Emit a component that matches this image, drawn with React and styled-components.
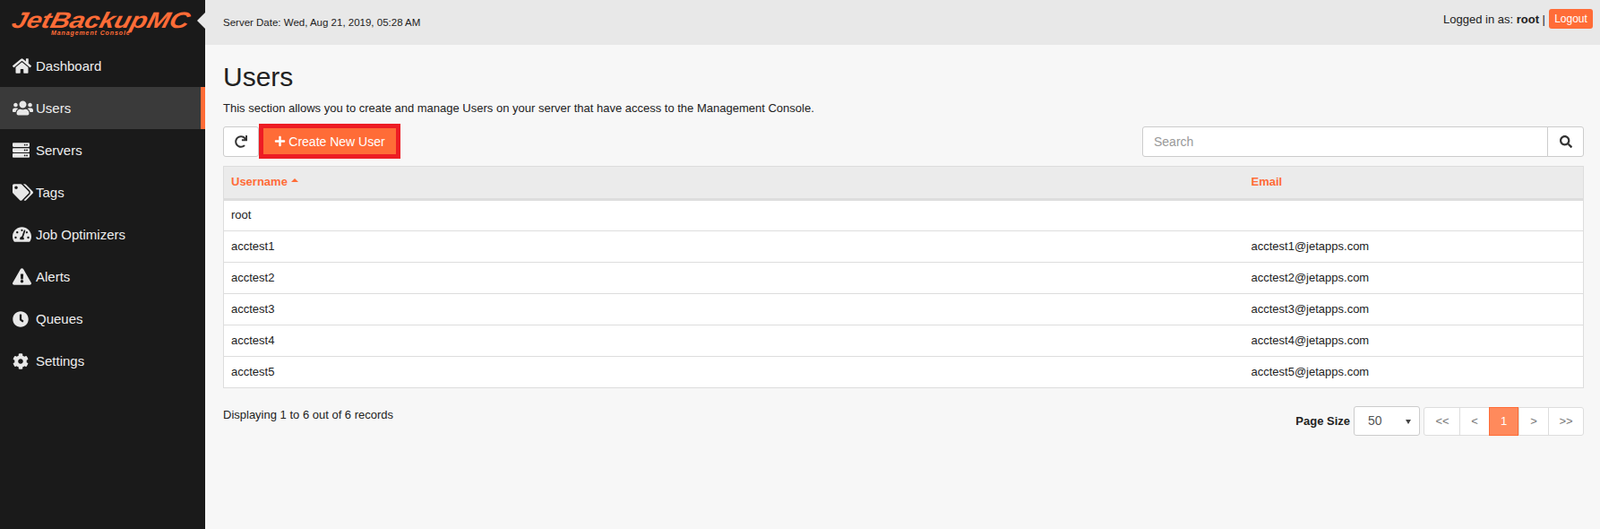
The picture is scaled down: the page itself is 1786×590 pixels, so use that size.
import React from 'react';
import styled, { createGlobalStyle } from 'styled-components';
import {
  FaHome,
  FaUsers,
  FaServer,
  FaTags,
  FaTachometerAlt,
  FaExclamationTriangle,
  FaClock,
  FaCog,
  FaRedo,
  FaPlus,
  FaSearch,
} from 'react-icons/fa';

const orange = '#ff6c37';

const GlobalStyle = createGlobalStyle`
  html, body {
    margin: 0;
    padding: 0;
    height: 100%;
    overflow: hidden;
  }
  body {
    font-family: "Liberation Sans", Arial, sans-serif;
    font-size: 13px;
    color: #222;
    background: #f7f7f7;
  }
  * {
    box-sizing: border-box;
  }
`;

const Page = styled.div`
  display: flex;
  height: 590px;
`;

const Sidebar = styled.aside`
  position: relative;
  flex: 0 0 229px;
  background: #1a1a1a;
`;

const Notch = styled.span`
  position: absolute;
  top: 14px;
  right: 0;
  border-style: solid;
  border-width: 9px 9px 9px 0;
  border-color: transparent #e8e8e8 transparent transparent;
`;

const Logo = styled.div`
  height: 50px;
  padding: 11px 0 0 14px;
  color: ${orange};
  font-style: italic;
  font-weight: bold;
`;

const LogoName = styled.div`
  font-size: 25px;
  line-height: 22px;
  letter-spacing: -0.2px;
  transform: scaleX(1.21) skewX(-12deg);
  transform-origin: left;
`;

const LogoSub = styled.div`
  position: relative;
  margin: 0 0 0 43px;
  font-size: 7px;
  line-height: 7px;
  letter-spacing: 0.9px;
`;

const Nav = styled.nav`
  display: flex;
  flex-direction: column;
`;

const NavItem = styled.a`
  display: flex;
  align-items: center;
  height: 47px;
  padding-left: 14px;
  font-size: 15px;
  color: #eee;
  background: ${(p) => (p.$active ? '#3a3a3a' : 'transparent')};
  border-right: 5px solid ${(p) => (p.$active ? orange : 'transparent')};
`;

const NavIcon = styled.span`
  display: flex;
  align-items: center;
  width: 26px;
  color: #e8e8e8;
`;

const Main = styled.main`
  flex: 1;
  min-width: 0;
  display: flex;
  flex-direction: column;
`;

const TopBar = styled.header`
  display: flex;
  align-items: center;
  justify-content: space-between;
  height: 50px;
  padding: 0 8px 0 20px;
  background: #e8e8e8;
`;

const ServerDate = styled.span`
  font-size: 11.5px;
`;

const Logged = styled.div`
  display: flex;
  align-items: center;
  gap: 4px;
  margin-top: -8px;
`;

const LogoutButton = styled.button`
  height: 22px;
  width: 49px;
  padding: 0;
  border: 0;
  border-radius: 3px;
  background: ${orange};
  color: #fff;
  font: 12px "Liberation Sans", Arial, sans-serif;
`;

const Content = styled.div`
  padding: 0 18px 0 20px;
`;

const Title = styled.h1`
  margin: 19px 0 0;
  font-size: 30px;
  font-weight: normal;
  line-height: 33px;
  color: #222;
`;

const Intro = styled.p`
  margin: 12px 0 0;
  line-height: 14px;
`;

const Toolbar = styled.div`
  display: flex;
  align-items: center;
  justify-content: space-between;
  height: 39px;
  margin-top: 10px;
`;

const ToolGroup = styled.div`
  display: flex;
  align-items: center;
`;

const RefreshButton = styled.button`
  display: flex;
  align-items: center;
  justify-content: center;
  width: 40px;
  height: 34px;
  border: 1px solid #ccc;
  border-radius: 3px;
  background: #fff;
  color: #333;
  font-size: 14px;
`;

const CreateButton = styled.button`
  display: flex;
  align-items: center;
  justify-content: center;
  gap: 3px;
  width: 158px;
  height: 39px;
  border: 5px solid #ed1c24;
  background: ${orange};
  color: #fff;
  font: 14px "Liberation Sans", Arial, sans-serif;
`;

const SearchBox = styled.div`
  display: flex;
  width: 493px;
  height: 34px;
`;

const SearchInput = styled.input`
  flex: 1;
  min-width: 0;
  padding: 0 12px;
  border: 1px solid #ccc;
  border-radius: 3px 0 0 3px;
  background: #fff;
  font: 14px "Liberation Sans", Arial, sans-serif;
  &::placeholder {
    color: #999;
  }
`;

const SearchButton = styled.button`
  display: flex;
  align-items: center;
  justify-content: center;
  width: 41px;
  margin-left: -1px;
  border: 1px solid #ccc;
  border-radius: 0 3px 3px 0;
  background: #fff;
  color: #333;
  font-size: 14px;
`;

const Table = styled.table`
  width: 100%;
  margin-top: 8px;
  border-collapse: collapse;
  table-layout: fixed;
  background: #fff;
  border: 1px solid #ddd;
`;

const HeadCell = styled.th`
  height: 37px;
  padding: 0 8px 2px;
  text-align: left;
  font-size: 13px;
  color: ${orange};
  background: #ebebeb;
  border-bottom: 3px solid #ddd;
  width: ${(p) => p.$width || 'auto'};
`;

const SortCaret = styled.span`
  display: inline-block;
  margin: 0 0 4px 4px;
  border-style: solid;
  border-width: 0 4px 4px;
  border-color: transparent transparent ${orange};
`;

const Row = styled.tr`
  height: 35px;
  border-bottom: 1px solid #ddd;
`;

const Cell = styled.td`
  padding: 0 8px 2px;
  color: #222;
`;

const Footer = styled.div`
  display: flex;
  justify-content: space-between;
  margin-top: 20px;
`;

const Records = styled.div`
  padding-top: 2px;
`;

const Pager = styled.div`
  display: flex;
  align-items: center;
`;

const PageSizeLabel = styled.label`
  margin-right: 4px;
  font-weight: bold;
`;

const SizeSelect = styled.div`
  position: relative;
  width: 74px;
  height: 33px;
  margin-right: 4px;
  padding-left: 15px;
  border: 1px solid #ccc;
  border-radius: 3px;
  background: #fff;
  color: #555;
  font-size: 14px;
  line-height: 31px;
  &::after {
    content: '';
    position: absolute;
    top: 14px;
    right: 9px;
    border-style: solid;
    border-width: 5px 3px 0;
    border-color: #444 transparent transparent;
  }
`;

const PageList = styled.div`
  display: flex;
  height: 32px;
  border: 1px solid #ddd;
  border-radius: 3px;
  background: #fff;
`;

const PageLink = styled.a`
  display: flex;
  align-items: center;
  justify-content: center;
  width: ${(p) => p.$width}px;
  margin: ${(p) => (p.$active ? '-1px 0' : 0)};
  border-left: 1px solid ${(p) => (p.$first ? 'transparent' : '#ddd')};
  border: ${(p) => (p.$active ? `1px solid ${orange}` : undefined)};
  background: ${(p) => (p.$active ? '#ff8a5c' : 'transparent')};
  color: ${(p) => (p.$active ? '#fff' : '#777')};
  font-size: 13px;
`;

const navItems = [
  { label: 'Dashboard', Icon: FaHome, size: 21 },
  { label: 'Users', Icon: FaUsers, size: 23, active: true },
  { label: 'Servers', Icon: FaServer, size: 19 },
  { label: 'Tags', Icon: FaTags, size: 23 },
  { label: 'Job Optimizers', Icon: FaTachometerAlt, size: 21 },
  { label: 'Alerts', Icon: FaExclamationTriangle, size: 21 },
  { label: 'Queues', Icon: FaClock, size: 18 },
  { label: 'Settings', Icon: FaCog, size: 18 },
];

const users = [
  { name: 'root', email: '' },
  { name: 'acctest1', email: 'acctest1@jetapps.com' },
  { name: 'acctest2', email: 'acctest2@jetapps.com' },
  { name: 'acctest3', email: 'acctest3@jetapps.com' },
  { name: 'acctest4', email: 'acctest4@jetapps.com' },
  { name: 'acctest5', email: 'acctest5@jetapps.com' },
];

const pages = [
  { label: '<<', width: 39 },
  { label: '<', width: 33 },
  { label: '1', width: 33, active: true },
  { label: '>', width: 33 },
  { label: '>>', width: 39 },
];

export default function App() {
  return (
    <Page>
      <GlobalStyle />
      <Sidebar>
        <Notch />
        <Logo>
          <LogoName>JetBackupMC</LogoName>
          <LogoSub>Management Console</LogoSub>
        </Logo>
        <Nav>
          {navItems.map(({ label, Icon, size, active }) => (
            <NavItem key={label} $active={active}>
              <NavIcon>
                <Icon size={size} />
              </NavIcon>
              {label}
            </NavItem>
          ))}
        </Nav>
      </Sidebar>
      <Main>
        <TopBar>
          <ServerDate>Server Date: Wed, Aug 21, 2019, 05:28 AM</ServerDate>
          <Logged>
            <span>
              Logged in as: <b>root</b> |
            </span>
            <LogoutButton>Logout</LogoutButton>
          </Logged>
        </TopBar>
        <Content>
          <Title>Users</Title>
          <Intro>
            This section allows you to create and manage Users on your server that have access to
            the Management Console.
          </Intro>
          <Toolbar>
            <ToolGroup>
              <RefreshButton>
                <FaRedo />
              </RefreshButton>
              <CreateButton>
                <FaPlus size={13} />
                Create New User
              </CreateButton>
            </ToolGroup>
            <SearchBox>
              <SearchInput placeholder="Search" />
              <SearchButton>
                <FaSearch />
              </SearchButton>
            </SearchBox>
          </Toolbar>
          <Table>
            <thead>
              <tr>
                <HeadCell $width="1139px">
                  Username
                  <SortCaret />
                </HeadCell>
                <HeadCell>Email</HeadCell>
              </tr>
            </thead>
            <tbody>
              {users.map((user) => (
                <Row key={user.name}>
                  <Cell>{user.name}</Cell>
                  <Cell>{user.email}</Cell>
                </Row>
              ))}
            </tbody>
          </Table>
          <Footer>
            <Records>Displaying 1 to 6 out of 6 records</Records>
            <Pager>
              <PageSizeLabel>Page Size</PageSizeLabel>
              <SizeSelect>50</SizeSelect>
              <PageList>
                {pages.map((page, i) => (
                  <PageLink key={page.label} $width={page.width} $active={page.active} $first={i === 0}>
                    {page.label}
                  </PageLink>
                ))}
              </PageList>
            </Pager>
          </Footer>
        </Content>
      </Main>
    </Page>
  );
}
